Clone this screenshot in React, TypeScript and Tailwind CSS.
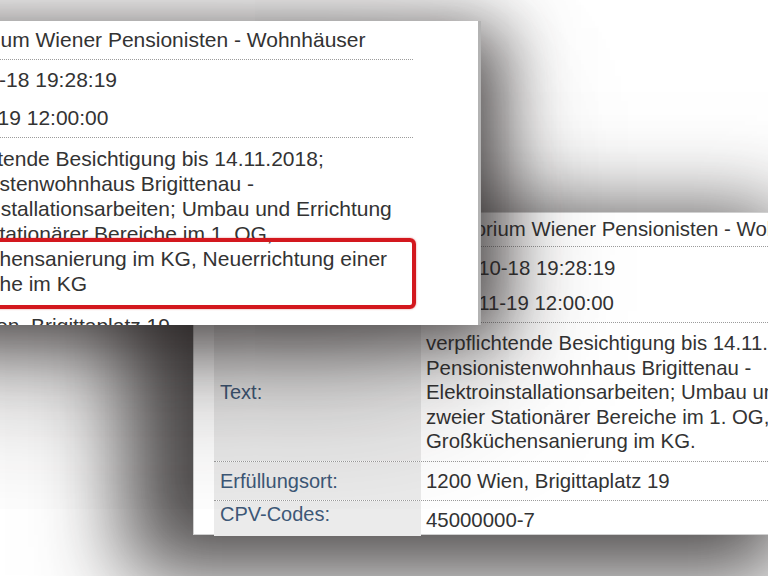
const font = "font-['Liberation_Sans',Arial,sans-serif]"

type Row = { label: string; lines: string[]; h: string; pt: string; labelPt?: string; sep?: boolean; center?: boolean; indent?: string }

const backRows: Row[] = [
  { label: 'Auftraggeber:', lines: ['Kuratorium Wiener Pensionisten - Wohnhäuser'], h: 'h-[34px]', pt: 'pt-[4px]', sep: true },
  { label: 'Veröffentlicht:', lines: ['2018-10-18 19:28:19'], h: 'h-[35px]', pt: 'pt-[9px]' },
  { label: 'Frist:', lines: ['2018-11-19 12:00:00'], h: 'h-[41px]', pt: 'pt-[9px]', sep: true },
  {
    label: 'Text:',
    lines: [
      'verpflichtende Besichtigung bis 14.11.2018;',
      'Pensionistenwohnhaus Brigittenau -',
      'Elektroinstallationsarbeiten; Umbau und Errichtung',
      'zweier Stationärer Bereiche im 1. OG,',
      'Großküchensanierung im KG.',
    ],
    h: 'h-[139px]', pt: 'pt-[8px]', sep: true, center: true,
  },
  { label: 'Erfüllungsort:', lines: ['1200 Wien, Brigittaplatz 19'], h: 'h-[39px]', pt: 'pt-[7px]', labelPt: 'pt-[7px]', sep: true },
  { label: 'CPV-Codes:', lines: ['45000000-7'], h: 'h-[35px]', pt: 'pt-[7px]', labelPt: 'pt-[1px]' },
]

const frontRows: Row[] = [
  { label: 'Auftraggeber:', lines: ['Kuratorium Wiener Pensionisten - Wohnhäuser'], h: 'h-[39px]', pt: 'pt-[6px]', sep: true, indent: 'pl-[8px]' },
  { label: 'Veröffentlicht:', lines: ['2018-10-18 19:28:19'], h: 'h-[38px]', pt: 'pt-[7px]', indent: 'pl-[3px]' },
  { label: 'Frist:', lines: ['2018-11-19 12:00:00'], h: 'h-[40px]', pt: 'pt-[7px]', sep: true, indent: '-ml-[4px]' },
  {
    label: 'Text:',
    lines: [
      'verpflichtende Besichtigung bis 14.11.2018;',
      'Pensionistenwohnhaus Brigittenau -',
      'Elektroinstallationsarbeiten; Umbau und Errichtung',
      'zweier Stationärer Bereiche im 1. OG,',
      'Großküchensanierung im KG, Neuerrichtung einer',
      'Großküche im KG',
    ],
    h: 'h-[169px]', pt: 'pt-[7.5px]', sep: true, center: true,
  },
  { label: 'Erfüllungsort:', lines: ['1200 Wien, Brigittaplatz 19'], h: 'h-[40px]', pt: 'pt-[5.5px]' },
]

function BackPanel() {
  return (
    <div className="absolute left-[193px] top-[212px] w-[620px] h-[323px] bg-white pl-[20px] border border-[#d0d0d0] shadow-[-48px_20px_80px_20px_rgba(30,25,25,0.78)]">
      {backRows.map((r, i) => (
        <div key={i} className={`grid grid-cols-[207px_1fr] ${r.h} ${r.sep ? 'border-b border-dotted border-[#9c9c9c]' : ''}`}>
          <div className={`bg-[#ebebeb] pl-[6px] text-[#3d5877] text-[20px] leading-[24.5px] ${r.center ? 'flex items-center' : r.labelPt ?? r.pt}`}>
            {r.label}
          </div>
          <div className={`pl-[5px] text-[#333] text-[20.4px] leading-[24.5px] whitespace-nowrap ${r.pt}`}>
            {r.lines.map((l, j) => <div key={j}>{l}</div>)}
          </div>
        </div>
      ))}
    </div>
  )
}

function FrontPanel() {
  return (
    <div className="absolute left-[-281px] top-[21px] w-[762px] h-[304px] bg-white overflow-hidden border-r-[3px] border-r-[#b3b3b3] shadow-[17px_12px_64px_5px_rgba(35,30,30,0.75),0_60px_160px_-20px_rgba(30,25,25,0.4)]">
      <div className="w-[694px]">
        {frontRows.map((r, i) => (
          <div key={i} className={`grid grid-cols-[200px_494px] ${r.h} ${r.sep ? 'border-b border-dotted border-[#9c9c9c]' : ''}`}>
            <div className={`pl-[6px] text-[#3d5877] text-[21px] leading-[25px] ${r.center ? 'flex items-center' : r.pt}`}>
              {r.label}
            </div>
            <div className={`${r.indent ?? 'pl-0'} text-[#333] text-[21px] leading-[25px] whitespace-nowrap ${r.pt}`}>
              {r.lines.map((l, j) => <div key={j}>{l}</div>)}
            </div>
          </div>
        ))}
      </div>
      {/* red highlight */}
      <div className="absolute left-[150px] top-[217px] w-[547px] h-[71px] rounded-[6px] border-[4px] border-[#d3181e] shadow-[0_0_2px_rgba(200,0,0,0.5)]" />
    </div>
  )
}

export default function App() {
  return (
    <div className={`relative w-[768px] h-[576px] overflow-hidden bg-white ${font}`}>
      <BackPanel />
      <FrontPanel />
    </div>
  )
}
